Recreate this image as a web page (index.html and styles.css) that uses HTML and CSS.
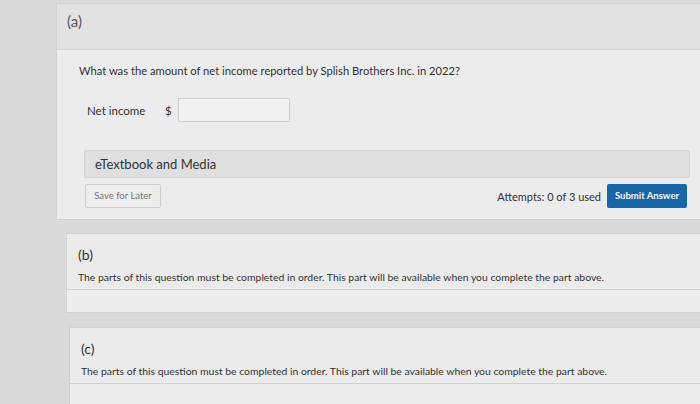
FILE: index.html
```html
<!DOCTYPE html>
<html>
<head>
<meta charset="utf-8">
<link rel="stylesheet" href="styles.css">
</head>
<body>
<div class="page">
  <section class="card card-a">
    <div class="card-head">(a)</div>
    <div class="card-body">
      <p class="question">What was the amount of net income reported by Splish Brothers Inc. in 2022?</p>
      <div class="answer-row">
        <span class="label">Net income</span>
        <span class="dollar">$</span>
        <span class="input"></span>
      </div>
      <div class="media-bar">eTextbook and Media</div>
      <div class="actions">
        <span class="btn-save">Save for Later</span>
        <span class="attempts">Attempts: 0 of 3 used</span>
        <span class="btn-submit">Submit Answer</span>
      </div>
    </div>
  </section>
  <section class="card card-b">
    <div class="locked-head">(b)</div>
    <p class="locked-text">The parts of this question must be completed in order. This part will be available when you complete the part above.</p>
    <div class="locked-foot"></div>
  </section>
  <section class="card card-c">
    <div class="locked-head">(c)</div>
    <p class="locked-text">The parts of this question must be completed in order. This part will be available when you complete the part above.</p>
    <div class="locked-foot"></div>
  </section>
</div>
</body>
</html>
```
FILE: styles.css
```css
html, body {
  margin: 0;
  padding: 0;
  background: #dadada;
  overflow: hidden;
}
body {
  font-family: Lato, "Open Sans", sans-serif;
  color: #3a3a3a;
  width: 700px;
  height: 404px;
}
.page {
  padding-top: 3px;
  display: flex;
  flex-direction: column;
}
.card {
  background: #ebebeb;
  border: 1px solid #d2d2d2;
  border-right: none;
}
.card-a {
  margin-left: 56px;
  height: 215px;
  display: flex;
  flex-direction: column;
}
.card-head {
  height: 45px;
  background: #e2e2e2;
  border-bottom: 1px solid #d4d4d4;
  padding-left: 10px;
  font-size: 15px;
  line-height: 34px;
  color: #555;
}
.card-body {
  background: #ececec;
  padding: 13px 10px 0 22px;
  flex: 1;
}
.question {
  margin: 0;
  font-size: 11.2px;
  line-height: 16px;
  color: #333;
}
.answer-row {
  display: flex;
  align-items: center;
  margin-top: 19px;
  padding-left: 8px;
  height: 24px;
}
.label {
  font-size: 11.5px;
  color: #333;
  width: 78px;
}
.dollar {
  font-size: 11.5px;
  color: #333;
  width: 13px;
}
.input {
  width: 110px;
  height: 22px;
  background: #f1f1f1;
  border: 1px solid #cfcfcf;
}
.media-bar {
  margin: 28px 0 0 5px;
  height: 26px;
  width: 594px;
  background: #dfdfdf;
  border: 1px solid #d3d3d3;
  border-radius: 2px;
  padding-left: 10px;
  font-size: 13px;
  line-height: 26px;
  color: #333;
}
.actions {
  display: flex;
  align-items: center;
  margin: 6px 0 0 6px;
  width: 602px;
}
.btn-save {
  height: 22px;
  width: 74px;
  border: 1px solid #cfcfcf;
  border-radius: 2px;
  background: #ededed;
  font-size: 9.5px;
  color: #777;
  line-height: 22px;
  text-align: center;
}
.attempts {
  margin-left: auto;
  font-size: 11px;
  color: #333;
  margin-right: 6px;
}
.btn-submit {
  height: 24px;
  width: 80px;
  background: #1866a6;
  border-radius: 2px;
  color: #f4f8fc;
  font-size: 9.5px;
  font-weight: bold;
  line-height: 24px;
  text-align: center;
}
.card-b {
  margin: 13px 0 0 66px;
  height: 78px;
  display: flex;
  flex-direction: column;
}
.card-c {
  margin: 14px 0 0 69px;
  height: 80px;
  display: flex;
  flex-direction: column;
}
.locked-head {
  padding: 12px 0 0 11px;
  font-size: 14px;
  line-height: 18px;
  color: #333;
}
.locked-text {
  margin: 6px 0 0 11px;
  font-size: 10.4px;
  line-height: 14px;
  color: #333;
}
.locked-foot {
  margin-top: 5px;
  flex: 1;
  border-top: 1px solid #d2d2d2;
  background: #ededed;
}
```
